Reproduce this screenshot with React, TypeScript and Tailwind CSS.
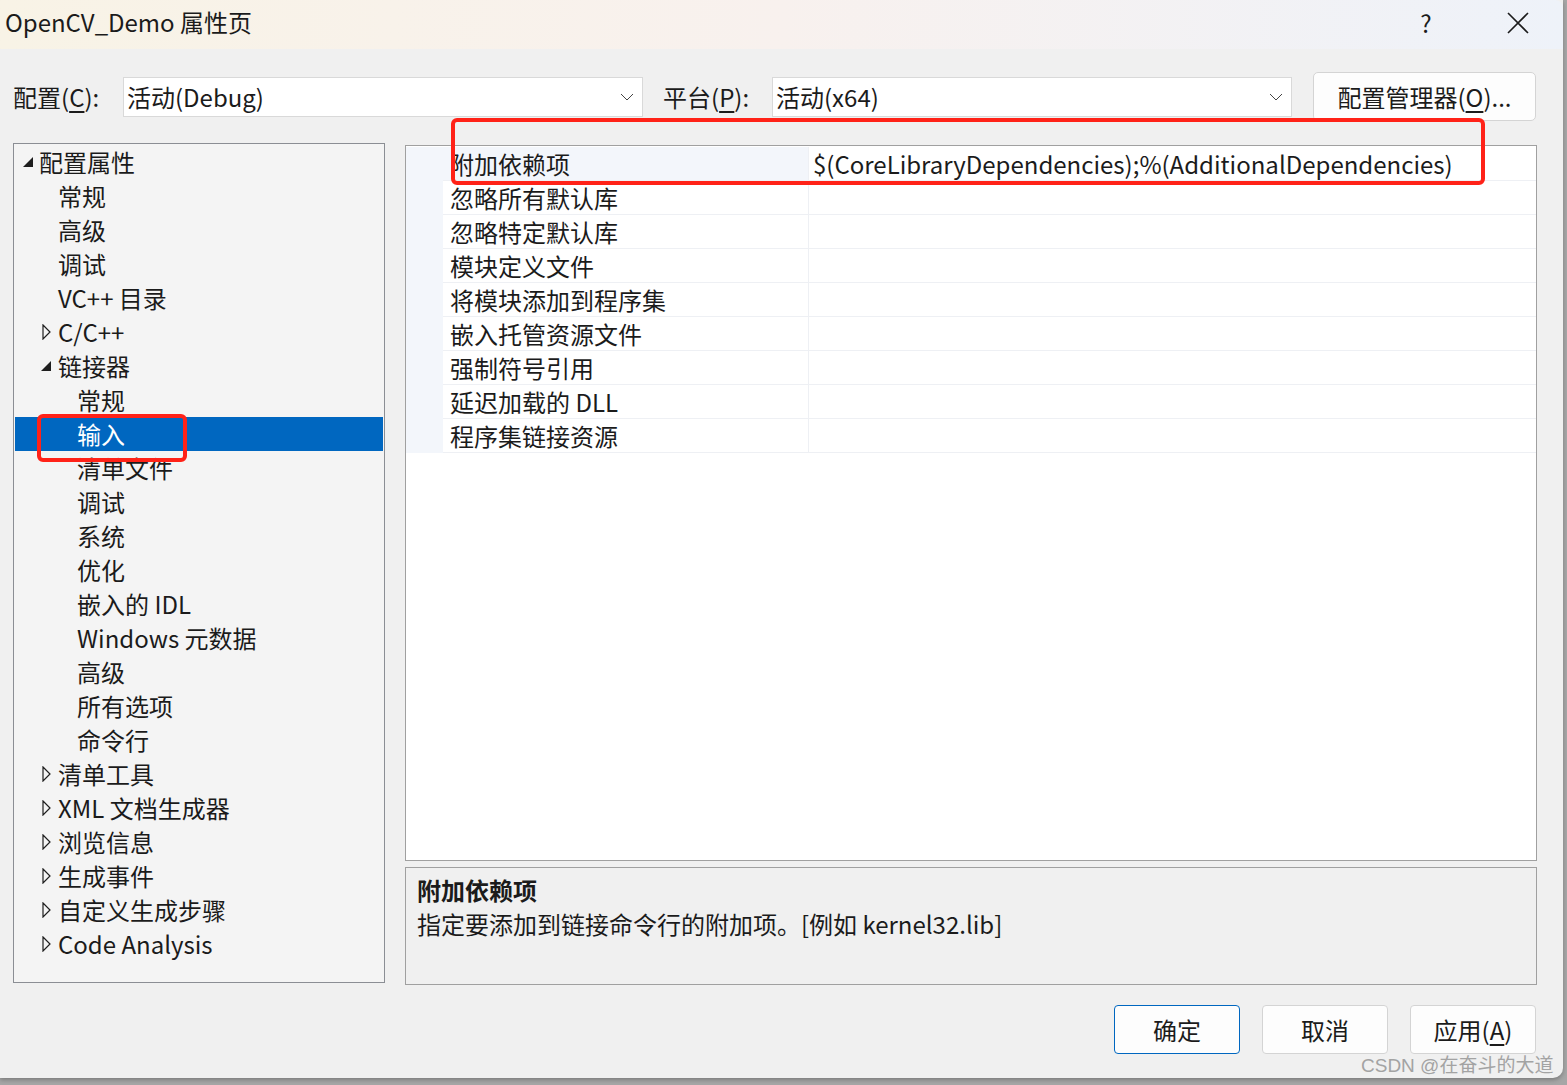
import React from 'react'

type TreeItem = { label: string; level: number; arrow?: 'open' | 'closed'; selected?: boolean }

const tree: TreeItem[] = [
  { label: '配置属性', level: 0, arrow: 'open' },
  { label: '常规', level: 1 },
  { label: '高级', level: 1 },
  { label: '调试', level: 1 },
  { label: 'VC++ 目录', level: 1 },
  { label: 'C/C++', level: 1, arrow: 'closed' },
  { label: '链接器', level: 1, arrow: 'open' },
  { label: '常规', level: 2 },
  { label: '输入', level: 2, selected: true },
  { label: '清单文件', level: 2 },
  { label: '调试', level: 2 },
  { label: '系统', level: 2 },
  { label: '优化', level: 2 },
  { label: '嵌入的 IDL', level: 2 },
  { label: 'Windows 元数据', level: 2 },
  { label: '高级', level: 2 },
  { label: '所有选项', level: 2 },
  { label: '命令行', level: 2 },
  { label: '清单工具', level: 1, arrow: 'closed' },
  { label: 'XML 文档生成器', level: 1, arrow: 'closed' },
  { label: '浏览信息', level: 1, arrow: 'closed' },
  { label: '生成事件', level: 1, arrow: 'closed' },
  { label: '自定义生成步骤', level: 1, arrow: 'closed' },
  { label: 'Code Analysis', level: 1, arrow: 'closed' },
]

const props = [
  { name: '附加依赖项', value: '$(CoreLibraryDependencies);%(AdditionalDependencies)' },
  { name: '忽略所有默认库', value: '' },
  { name: '忽略特定默认库', value: '' },
  { name: '模块定义文件', value: '' },
  { name: '将模块添加到程序集', value: '' },
  { name: '嵌入托管资源文件', value: '' },
  { name: '强制符号引用', value: '' },
  { name: '延迟加载的 DLL', value: '' },
  { name: '程序集链接资源', value: '' },
]

function Chevron() {
  return (
    <svg width="14" height="8" viewBox="0 0 14 8" className="shrink-0">
      <polyline points="1,1 7,7 13,1" fill="none" stroke="#444" strokeWidth="1" />
    </svg>
  )
}

function Arrow({ kind }: { kind: 'open' | 'closed' }) {
  if (kind === 'open')
    return (
      <svg width="11" height="11" viewBox="0 0 11 11">
        <polygon points="10,0 10,10 0,10" fill="#1e1e1e" />
      </svg>
    )
  return (
    <svg width="9" height="16" viewBox="0 0 9 16">
      <polygon points="1,1 8,8 1,15" fill="none" stroke="#1e1e1e" strokeWidth="1.2" />
    </svg>
  )
}

export default function App() {
  return (
    <div className="w-[1567px] h-[1085px] bg-[#a6a6a6] overflow-hidden relative font-['Noto_Sans_CJK_SC','Noto_Sans',sans-serif] text-[#1b1b1b]">
      <div className="w-[1563px] h-[1078px] bg-[#f0f0f0] rounded-br-[10px] flex flex-col shadow-[0_2px_4px_rgba(0,0,0,0.25)]">
        {/* title bar */}
        <div className="h-[49px] flex items-center justify-between bg-gradient-to-r from-[#f8f3e6] via-[#f8f1ee] to-[#eef2f9] rounded-tr-[8px]">
          <div className="pl-[5px] text-[24px] leading-none pb-[5px]">OpenCV_Demo 属性页</div>
          <div className="flex items-center h-full">
            <div className="w-[90px] text-center text-[24px] leading-none pb-[4px]">?</div>
            <div className="w-[92px] flex items-center justify-center pl-[2px] pb-[4px]">
              <svg width="22" height="22" viewBox="0 0 22 22">
                <path d="M1 1 L21 21 M21 1 L1 21" stroke="#1b1b1b" strokeWidth="1.6" />
              </svg>
            </div>
          </div>
        </div>

        {/* config row */}
        <div className="flex items-center h-[49px] mt-[23px] text-[24px]">
          <div className="w-[123px] pl-[13px] leading-none">配置(<span className="underline underline-offset-4">C</span>):</div>
          <div className="w-[520px] h-[40px] bg-white border border-[#d9d9d9] flex items-center justify-between pl-[3px] pr-[8px]">
            <span className="leading-none">活动(Debug)</span>
            <Chevron />
          </div>
          <div className="w-[129px] pl-[20px] leading-none">平台(<span className="underline underline-offset-4">P</span>):</div>
          <div className="w-[520px] h-[40px] bg-white border border-[#d9d9d9] flex items-center justify-between pl-[3px] pr-[8px]">
            <span className="leading-none">活动(x64)</span>
            <Chevron />
          </div>
          <div className="ml-[21px] w-[223px] h-[49px] bg-[#fdfdfd] border border-[#d4d4d4] rounded-[5px] flex items-center justify-center leading-none">
            配置管理器(<span className="underline underline-offset-4">O</span>)...
          </div>
        </div>

        {/* main */}
        <div className="flex mt-[22px] pl-[13px]">
          <div className="w-[372px] h-[840px] border border-[#8b8e94] bg-[#f4f4f4] pt-[1px] px-[1px] text-[24px]">
            {tree.map((t, i) => (
              <div
                key={i}
                className={`h-[34px] flex items-center ${t.selected ? 'bg-[#0067c0] text-white' : ''}`}
              >
                <div className={`flex items-center justify-center shrink-0 ${t.level === 0 ? 'w-[24px] pl-[2px]' : t.level === 1 ? 'w-[43px] pl-[20px]' : 'w-[62px]'}`}>
                  {t.arrow && <Arrow kind={t.arrow} />}
                </div>
                <span className="leading-none whitespace-pre">{t.label}</span>
              </div>
            ))}
          </div>

          <div className="ml-[20px] w-[1132px] flex flex-col">
            <div className="mt-[2px] h-[716px] border border-[#a0a0a0] bg-white pt-[1px] text-[24px]">
              {props.map((p, i) => (
                <div key={i} className="h-[34px] flex">
                  <div className="w-[37px] bg-[#f3f6fb] shrink-0" />
                  <div className={`w-[365px] flex items-center pl-[7px] border-b border-[#eef0f4] ${i === 0 ? 'bg-[#f3f6fb]' : ''}`}>
                    <span className="leading-none">{p.name}</span>
                  </div>
                  <div className="flex-1 flex items-center pl-[4px] border-b border-l border-[#eef0f4]">
                    <span className="leading-none">{p.value}</span>
                  </div>
                </div>
              ))}
            </div>
            <div className="mt-[6px] h-[118px] border border-[#a0a0a0] bg-[#f0f0f0] px-[11px] pt-[6px] text-[24px]">
              <div className="font-bold leading-[32px]">附加依赖项</div>
              <div className="leading-[36px]">指定要添加到链接命令行的附加项。[例如 kernel32.lib]</div>
            </div>
          </div>
        </div>

        {/* buttons */}
        <div className="flex justify-end gap-[22px] pr-[27px] mt-[20px] text-[24px]">
          <div className="w-[126px] h-[49px] bg-[#fdfdfd] border border-[#0067c0] rounded-[4px] flex items-center justify-center leading-none">确定</div>
          <div className="w-[126px] h-[49px] bg-[#fdfdfd] border border-[#d4d4d4] rounded-[4px] flex items-center justify-center leading-none">取消</div>
          <div className="w-[126px] h-[49px] bg-[#fdfdfd] border border-[#d4d4d4] rounded-[4px] flex items-center justify-center leading-none">
            应用(<span className="underline underline-offset-4">A</span>)
          </div>
        </div>
      </div>

      {/* annotation boxes */}
      <div className="absolute left-[451px] top-[118px] w-[1034px] h-[67px] border-[4px] border-[#ff2218] rounded-[6px]" />
      <div className="absolute left-[37px] top-[414px] w-[150px] h-[48px] border-[4px] border-[#ff2218] rounded-[6px]" />

      {/* watermark */}
      <div className="absolute left-[1361px] top-[1056px] text-[19px] leading-none text-[#a3a3a3] font-['Liberation_Sans','Noto_Sans_CJK_SC',sans-serif]">
        CSDN @在奋斗的大道
      </div>
    </div>
  )
}
